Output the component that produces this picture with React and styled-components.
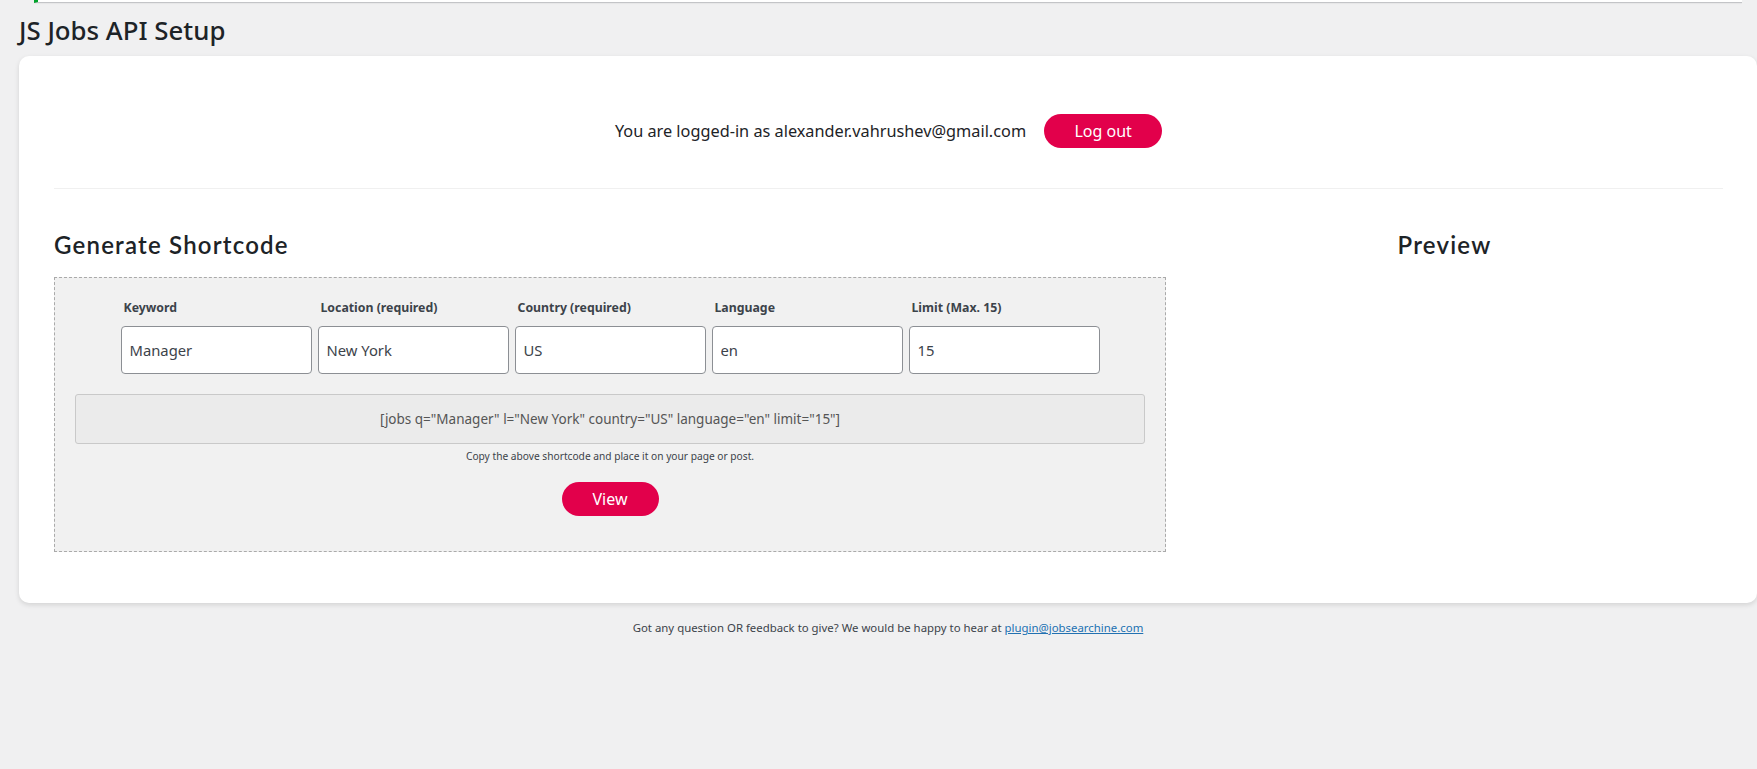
import React from "react";
import styled, { createGlobalStyle } from "styled-components";

const Global = createGlobalStyle`
  html, body { margin: 0; padding: 0; background: #f0f0f1; }
  body { font-family: "Noto Sans", "Open Sans", sans-serif; color: #1d2327; }
  * { box-sizing: border-box; }
`;

const Page = styled.div`
  min-height: 769px;
  display: flex;
  flex-direction: column;
`;

const NoticeEdge = styled.div`
  height: 3px;
  margin: 0 15px 0 34px;
  background: #fff;
  border-left: 4px solid #00a32a;
  border-bottom: 1px solid #c3c4c7;
  box-shadow: 0 1px 1px rgba(0,0,0,0.04);
`;

const Title = styled.h1`
  margin: 11px 0 10px 19px;
  font-size: 25.8px;
  line-height: 32px;
  font-weight: 500;
  color: #1d2327;
`;

const Card = styled.section`
  margin-left: 19px;
  background: #fff;
  border-radius: 10px;
  box-shadow: 0 2px 5px rgba(0,0,0,0.12);
  padding: 58px 34px 51px 35px;
`;

const LoginRow = styled.div`
  display: flex;
  justify-content: center;
  align-items: center;
  gap: 18px;
  padding-bottom: 40px;
  border-bottom: 1px solid #f0f0f0;
`;

const LoginText = styled.span`
  font-size: 16.3px;
  color: #1d2327;
`;

const PillButton = styled.button`
  border: none;
  background: #e2004b;
  color: #fff;
  font-family: inherit;
  font-size: 16px;
  height: 34px;
  width: ${p => p.$w}px;
  border-radius: 17px;
  padding: 0;
  cursor: pointer;
`;

const Columns = styled.div`
  display: grid;
  grid-template-columns: 1112px 1fr;
  margin-top: 41px;
`;

const Heading = styled.h2`
  margin: 0 0 17px;
  font-family: "Lato", sans-serif;
  font-size: 24px;
  line-height: 30px;
  font-weight: 600;
  letter-spacing: 1.2px;
  color: #1d2327;
  text-align: ${p => (p.$center ? "center" : "left")};
`;

const DashedBox = styled.div`
  background: #f1f1f1;
  border: 1px dashed #aaa;
  padding: 21px 20px 35px;
  display: flex;
  flex-direction: column;
  align-items: center;
`;

const FieldsRow = styled.div`
  display: flex;
  gap: 6px;
`;

const Field = styled.div`
  display: flex;
  flex-direction: column;
  gap: 10px;
  width: 191px;
`;

const Label = styled.label`
  font-size: 12.3px;
  line-height: 17px;
  font-weight: 700;
  color: #3c434a;
  padding-left: 3px;
`;

const Input = styled.input`
  height: 48px;
  width: 100%;
  border: 1px solid #8c8f94;
  border-radius: 4px;
  background: #fff;
  padding: 0 8px;
  font-family: inherit;
  font-size: 14.8px;
  color: #3c434a;
  outline: none;
`;

const ShortcodeBox = styled.div`
  align-self: stretch;
  margin-top: 20px;
  height: 50px;
  background: #ebebeb;
  border: 1px solid #c9c9c9;
  border-radius: 3px;
  display: flex;
  align-items: center;
  justify-content: center;
  font-size: 13.5px;
  color: #555;
`;

const Caption = styled.p`
  margin: 5px 0 19px;
  font-size: 10.2px;
  line-height: 14px;
  color: #3c434a;
`;

const Footer = styled.p`
  margin: 17px 0 0 19px;
  text-align: center;
  font-size: 11.4px;
  line-height: 16px;
  color: #3c434a;
  a { color: #2271b1; text-decoration: underline; }
`;

const fields = [
  { label: "Keyword", value: "Manager" },
  { label: "Location (required)", value: "New York" },
  { label: "Country (required)", value: "US" },
  { label: "Language", value: "en" },
  { label: "Limit (Max. 15)", value: "15" },
];

export default function App() {
  return (
    <Page>
      <Global />
      <NoticeEdge />
      <Title>JS Jobs API Setup</Title>
      <Card>
        <LoginRow>
          <LoginText>You are logged-in as alexander.vahrushev@gmail.com</LoginText>
          <PillButton $w={118}>Log out</PillButton>
        </LoginRow>
        <Columns>
          <div>
            <Heading>Generate Shortcode</Heading>
            <DashedBox>
              <FieldsRow>
                {fields.map(f => (
                  <Field key={f.label}>
                    <Label>{f.label}</Label>
                    <Input defaultValue={f.value} />
                  </Field>
                ))}
              </FieldsRow>
              <ShortcodeBox>
                [jobs q="Manager" l="New York" country="US" language="en" limit="15"]
              </ShortcodeBox>
              <Caption>Copy the above shortcode and place it on your page or post.</Caption>
              <PillButton $w={97}>View</PillButton>
            </DashedBox>
          </div>
          <div>
            <Heading $center>Preview</Heading>
          </div>
        </Columns>
      </Card>
      <Footer>
        Got any question OR feedback to give? We would be happy to hear at{" "}
        <a href="#">plugin@jobsearchine.com</a>
      </Footer>
    </Page>
  );
}
